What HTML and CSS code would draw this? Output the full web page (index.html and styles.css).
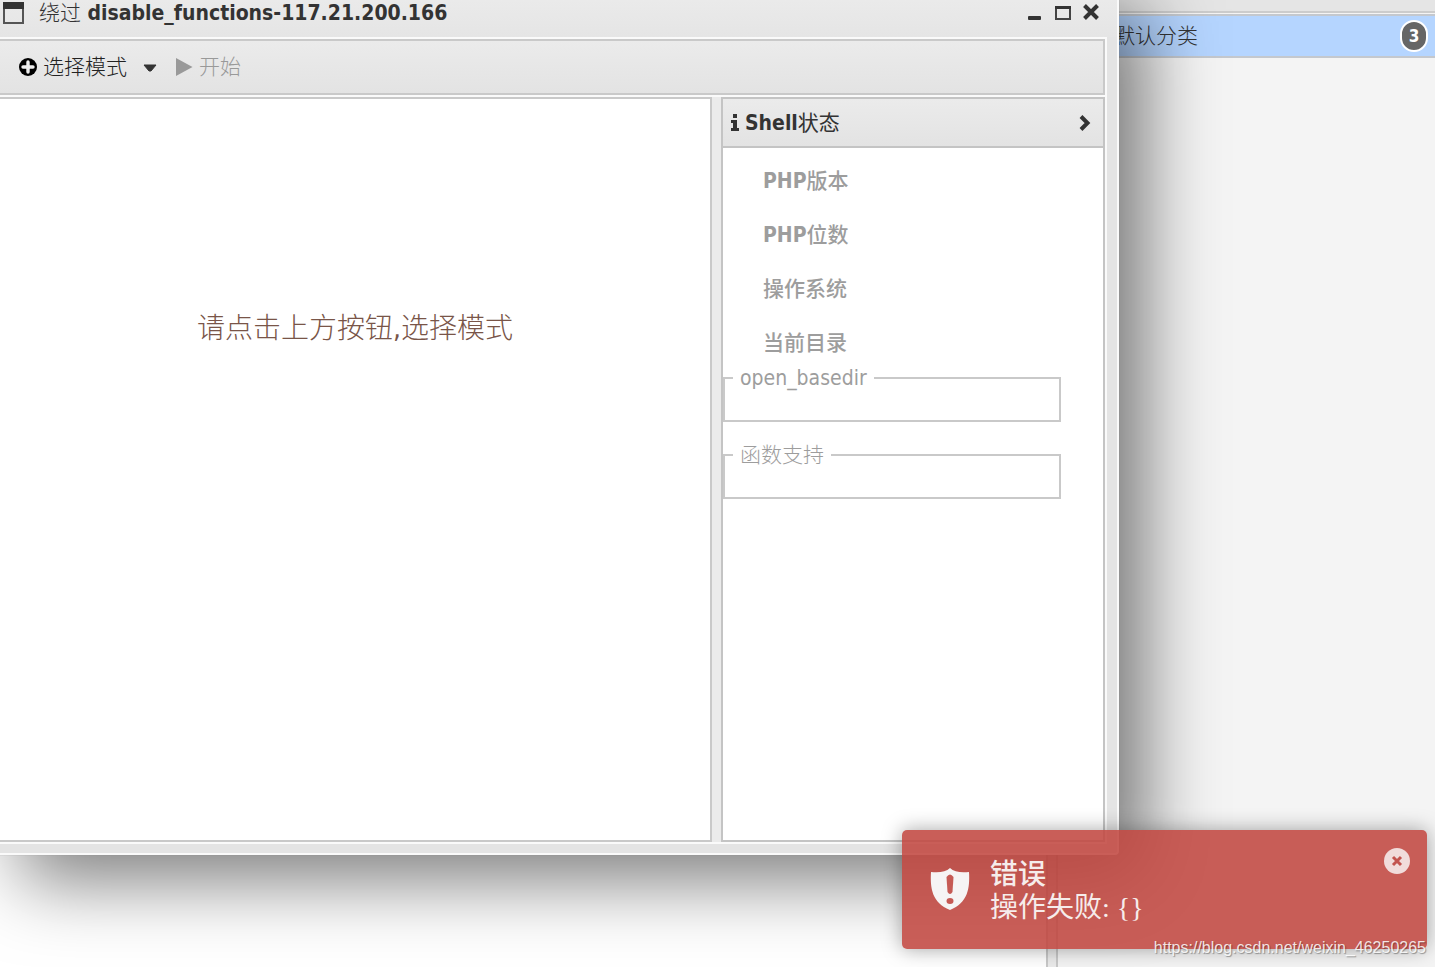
FILE: index.html
```html
<!DOCTYPE html>
<html lang="zh-CN">
<head>
<meta charset="utf-8">
<title>绕过 disable_functions</title>
<link rel="stylesheet" href="styles.css">
</head>
<body>
<div class="desktop">
  <main class="desk-main"></main>
  <div class="desk-split"></div>
  <aside class="sidebar">
    <div class="sidebar-head"></div>
    <div class="category">
      <span class="category-name">默认分类</span>
      <span class="badge">3</span>
    </div>
  </aside>
</div>

<section class="window">
  <header class="titlebar">
    <svg class="win-icon" width="22" height="22" viewBox="0 0 22 22"><rect x="1" y="1" width="19" height="20" fill="none" stroke="#555" stroke-width="2"/><path d="M0 0h21v7H0z" fill="#333"/></svg>
    <h1 class="title"><span class="light">绕过</span> disable_functions-117.21.200.166</h1>
    <div class="win-controls">
      <button class="icon-btn" aria-label="最小化"><svg width="16" height="18" viewBox="0 0 16 18"><rect x="1" y="12" width="13" height="4" rx="1" fill="#333"/></svg></button>
      <button class="icon-btn" aria-label="最大化"><svg width="16" height="18" viewBox="0 0 16 18"><path d="M1 3v12h14V3z" fill="none" stroke="#444" stroke-width="2"/><path d="M0 2h16v3H0z" fill="#333"/></svg></button>
      <button class="icon-btn" aria-label="关闭"><svg width="16" height="18" viewBox="0 0 16 18"><path d="M1.500 1.500l13 13M14.500 1.500l-13 13" stroke="#333" stroke-width="4"/></svg></button>
    </div>
  </header>
  <div class="win-body">
    <nav class="toolbar">
      <button class="tool">
        <svg width="18" height="18" viewBox="0 0 18 18"><circle cx="9" cy="9" r="9" fill="#000"/><path d="M9 4v10M4 9h10" stroke="#eee" stroke-width="3.400" stroke-linecap="round"/></svg>
        选择模式
        <svg class="caret" width="14" height="10" viewBox="0 0 14 10"><path d="M1 3h12L8 9H6z" fill="#333" stroke="#333" stroke-linejoin="round"/></svg>
      </button>
      <button class="tool" disabled>
        <svg width="18" height="20" viewBox="0 0 18 20"><path d="M1 1l16.500 9L1 19z" fill="#999"/></svg>
        开始
      </button>
    </nav>
    <div class="panes">
      <div class="pane-main"><p class="hint">请点击上方按钮,选择模式</p></div>
      <div class="pane-side">
        <div class="pane-head">
          <svg width="10" height="18" viewBox="0 0 10 18"><path d="M3 0h4v4H3zM1 6h6v8h2v3H1v-3h2V9H1z" fill="#333"/></svg>
          <h2 class="pane-title">Shell<span class="plain">状态</span></h2>
          <button class="icon-btn" aria-label="折叠"><svg width="12" height="18" viewBox="0 0 12 18"><path d="M2 2.500L8.500 9L2 15.500" fill="none" stroke="#333" stroke-width="4"/></svg></button>
        </div>
        <div class="form">
          <ul class="facts"><li>PHP<span class="medium">版本</span></li><li>PHP<span class="medium">位数</span></li><li class="medium">操作系统</li><li class="medium">当前目录</li></ul>
          <fieldset class="group"><legend>open_basedir</legend></fieldset>
          <fieldset class="group"><legend class="light">函数支持</legend></fieldset>
        </div>
      </div>
    </div>
  </div>
</section>

<div class="toast" role="alert">
  <svg class="shield" width="40" height="44" viewBox="0 0 40 44"><path d="M20 1c4 4 11 5 19 4 1 16-1 31-19 38C2 36 0 21 1 5c8 1 15 0 19-4z" fill="#f6f4f4"/><path d="M16.500 10q3.500-5 7 0l-1 15q-2.500 4-5 0z" fill="#c65a54"/><ellipse cx="20" cy="34" rx="3.500" ry="3" fill="#c65a54"/></svg>
  <div class="toast-text"><strong>错误</strong><p>操作失败: {}</p></div>
  <button class="toast-close" aria-label="关闭"><svg width="26" height="26" viewBox="0 0 26 26"><circle cx="13" cy="13" r="13" fill="#f1dcdb"/><path d="M9 9l8 8M17 9l-8 8" stroke="#c3544f" stroke-width="3"/></svg></button>
</div>
<div class="watermark">https://blog.csdn.net/weixin_46250265</div>
</body>
</html>
```

FILE: styles.css
```css
* { box-sizing: border-box; }

body {
  margin: 0;
  height: 100vh;
  overflow: hidden;
  position: relative;
  font: 21px/28px "DejaVu Sans Condensed", "Noto Sans CJK SC", sans-serif;
  color: #333;
}

h1, h2, p, ul { margin: 0; padding: 0; font: inherit; }

button {
  border: 0;
  padding: 0;
  background: none;
  font: inherit;
  color: inherit;
}

svg { display: block; flex: none; }

.desktop {
  display: grid;
  grid-template-columns: 1fr 12px 377px;
  height: 100%;
}
.desk-main { background: #fff; }
.desk-split { background: #ebebeb; border: solid #c9c9c9; border-width: 0 2px; }
.sidebar { background: #f4f4f4; }
.sidebar-head {
  height: 13px;
  background: #e5e5e5;
  border-bottom: 2px solid #ccc;
}
.category {
  display: flex;
  align-items: center;
  justify-content: space-between;
  margin-top: 1px;
  height: 44px;
  padding: 0 7px 0 56px;
  background: #b5d5ff;
  border: solid #c4c8ce;
  border-width: 2px 0;
}
.category-name { font-weight: 300; }
.badge {
  width: 28px;
  height: 32px;
  border: 2px solid #fff;
  border-radius: 14px;
  background: #666;
  color: #fff;
  font-size: 17px;
  font-weight: 700;
  text-align: center;
}

.window {
  position: absolute;
  top: -16px;
  right: 316px;
  bottom: 112px;
  left: -4px;
  display: flex;
  flex-direction: column;
  padding: 0 10px 9px 0;
  background: #e4e4e4;
  border: 2px solid #fafafa;
  border-radius: 4px;
  box-shadow: 0 0 1px #888, 25px 25px 75px rgba(0, 0, 0, .52);
}
.titlebar {
  display: flex;
  align-items: center;
  flex: none;
  height: 51px;
  margin-right: -10px;
  padding: 2px 18px 0 5px;
  background: linear-gradient(#ececec, #e5e5e5);
}
.title { flex: 1; margin-left: 14px; font-weight: 700; }
.light { font-weight: 300; }
.plain { font-weight: 400; }
.medium { font-weight: 500; }
.win-controls { display: flex; gap: 12px; }

.win-body {
  flex: 1;
  display: flex;
  flex-direction: column;
  gap: 2px;
  background: #fafafa;
  border: solid #fafafa;
  border-width: 2px 2px 2px 0;
}
.toolbar {
  display: flex;
  align-items: center;
  gap: 18px;
  height: 56px;
  padding: 0 19px;
  background: linear-gradient(#ebebeb, #e3e3e3);
  border: 2px solid #c9c9c9;
}
.tool { display: flex; align-items: center; gap: 6px; font-weight: 300; color: #222; }
.tool:disabled { color: #999; }
.caret { margin-left: 10px; }

.panes {
  flex: 1;
  display: grid;
  grid-template-columns: 1fr 384px;
  gap: 9px;
  background: #ebebeb;
}
.pane-main {
  padding-top: 212px;
  background: #fff;
  border: 2px solid #c9c9c9;
  text-align: center;
}
.hint { font-size: 28px; line-height: 36px; font-weight: 300; color: #795548; }
.pane-side { background: #fff; border: 2px solid #c4c4c4; }
.pane-head {
  display: flex;
  align-items: center;
  gap: 5px;
  height: 49px;
  padding: 0 12px 0 7px;
  background: linear-gradient(#ebebeb, #e3e3e3);
  border-bottom: 2px solid #c4c4c4;
}
.pane-title { flex: 1; font-weight: 700; }
.form { padding: 6px 42px 0 0; color: #9d9d9d; }
.facts { list-style: none; padding-left: 40px; font-weight: 700; line-height: 54px; }
.group {
  height: 52px;
  margin: 0 0 25px;
  padding: 0 8px;
  border: 2px solid #c9c9c9;
}
.group legend { padding: 0 7px; line-height: 16px; }

.toast {
  position: absolute;
  right: 8px;
  bottom: 18px;
  display: flex;
  align-items: flex-start;
  width: 525px;
  height: 119px;
  padding: 18px 17px 0 28px;
  border-radius: 5px;
  background: rgba(193, 70, 63, .87);
  box-shadow: 0 0 20px rgba(0, 0, 0, .35);
  color: #f6eceb;
}
.shield { margin-top: 19px; }
.toast-text { flex: 1; margin: 10px 0 0 20px; font: 28px/33px "Liberation Serif", "Noto Sans CJK SC", serif; }
.toast-text strong { display: block; font-weight: 500; }

.watermark {
  position: absolute;
  right: 9px;
  bottom: 9px;
  font: 16px/20px "Liberation Sans", sans-serif;
  color: rgba(255, 255, 255, .85);
  text-shadow: 1px 1px 1px rgba(0, 0, 0, .35);
}
```
